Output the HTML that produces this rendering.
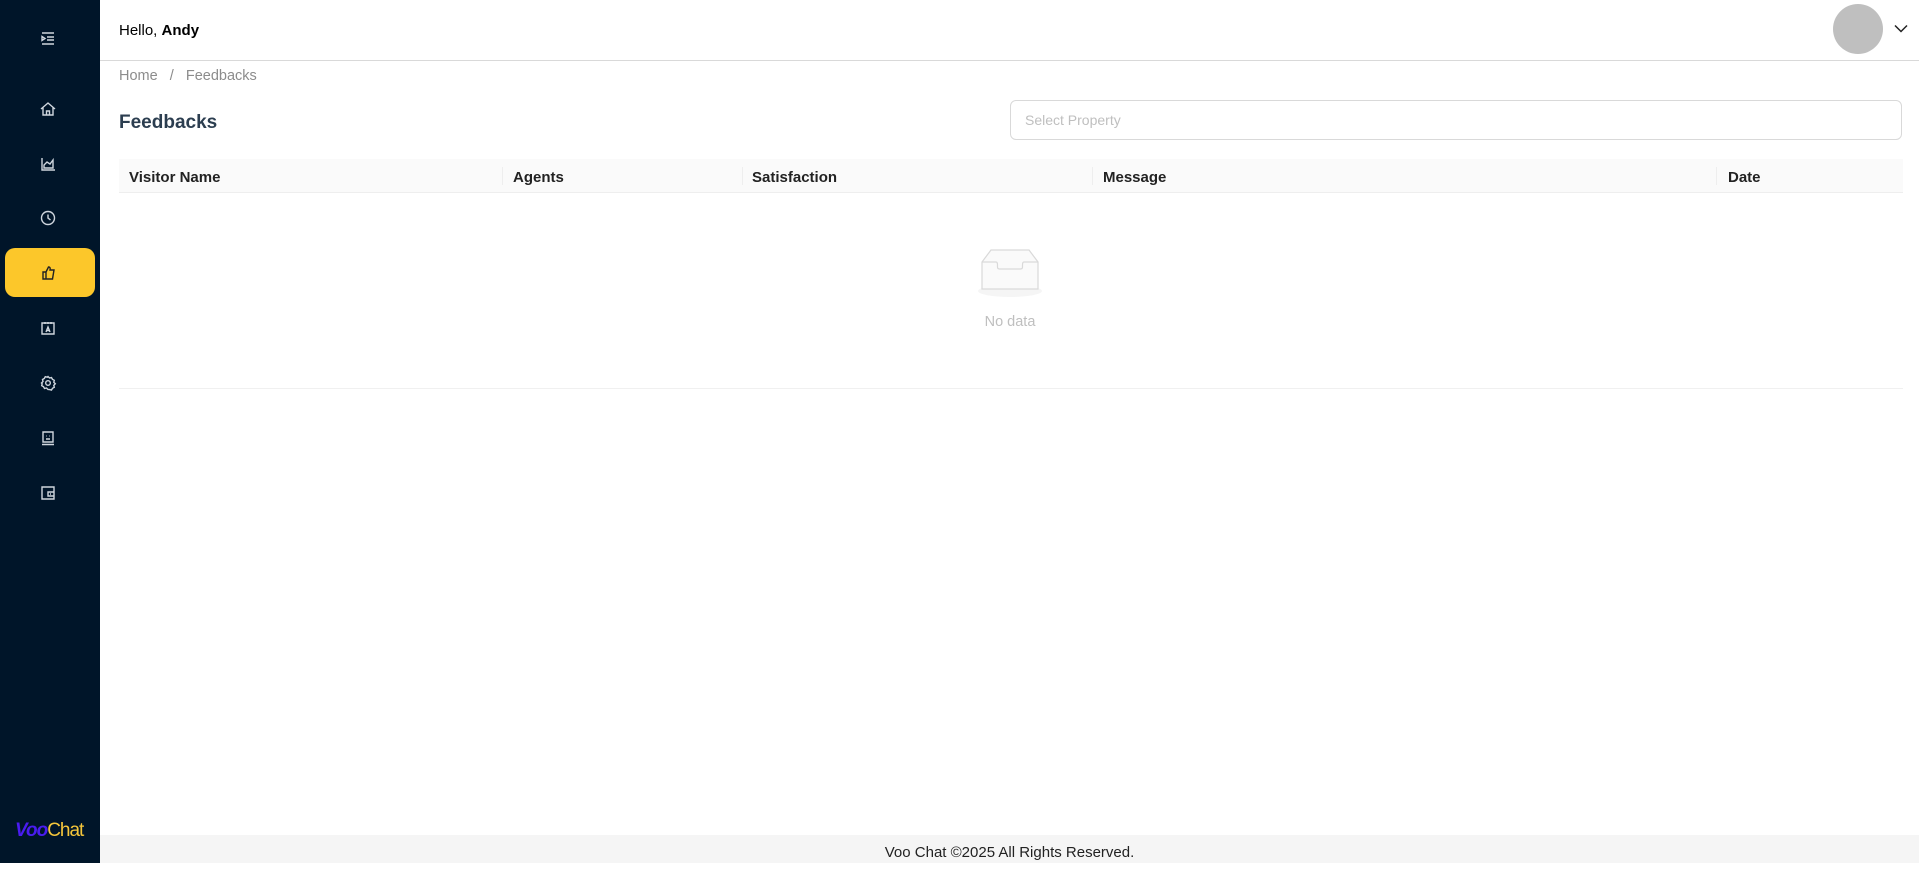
<!DOCTYPE html>
<html><head><meta charset="utf-8"><style>
*{box-sizing:border-box;margin:0;padding:0}
body{width:1919px;height:863px;overflow:hidden;font-family:"Liberation Sans",sans-serif;background:#fff;position:relative;color:#000}
.sb{position:absolute;left:0;top:0;width:100px;height:863px;background:#001529}
.ic{position:absolute;left:38px;width:20px;height:20px}
.ic svg{width:20px;height:20px;fill:none;stroke:#cfd6de;stroke-width:1.4}
.act{position:absolute;left:5px;top:248px;width:90px;height:49px;background:#fcc72a;border-radius:10px}
.hdr{position:absolute;left:100px;top:0;right:0;height:61px;border-bottom:1px solid #d9d9d9}
.abs{position:absolute}
.th{position:absolute;top:159px;height:34px;background:#fafafa;border-bottom:1px solid #eee;font-size:15px;font-weight:600;line-height:38px;color:#222}
.sep{position:absolute;top:167px;width:1px;height:18px;background:#eee}
</style></head><body>
<div class="sb">
 <div class="ic" style="top:28px"><svg viewBox="0 0 20 20"><path d="M4 5h12M9 9h7M9 12h7M4 16h12M4 8.5l3 2-3 2z"/></svg></div>
 <div class="ic" style="top:99px"><svg viewBox="0 0 20 20"><path d="M3 10l7-6 7 6M5 8.5V16h10V8.5M8.5 16v-4h3v4"/></svg></div>
 <div class="ic" style="top:154px"><svg viewBox="0 0 20 20"><path d="M4 4v12h13M6 14v-3l3-3 3 2 3-4v8z"/></svg></div>
 <div class="ic" style="top:208px"><svg viewBox="0 0 20 20"><circle cx="10" cy="10" r="6.5"/><path d="M10 6.5V10l2.5 2"/></svg></div>
 <div class="act"></div>
 <div class="ic" style="top:263px"><svg viewBox="0 0 20 20" style="stroke:#222"><path d="M5 9h3v7H5zM8 9l2.5-5c1.5 0 2 1 1.5 3H16l-1.5 9H8"/></svg></div>
 <div class="ic" style="top:318px"><svg viewBox="0 0 20 20"><path d="M4 5h12v11H4zM7 4v2M10 4v2M13 4v2M8 14l2-5 2 5M8.7 12.5h2.6"/></svg></div>
 <div class="ic" style="top:373px"><svg viewBox="0 0 20 20"><circle cx="10" cy="10" r="2.3"/><path d="M10 3.5l1.5 1.5 2-.5 1 1.8 1.8 1-.5 2 1.5 1.5-1.5 1.5.5 2-1.8 1-1 1.8-2-.5L10 16.5l-1.5-1.5-2 .5-1-1.8-1.8-1 .5-2L3.5 10l1.5-1.5-.5-2 1.8-1 1-1.8 2 .5z"/></svg></div>
 <div class="ic" style="top:428px"><svg viewBox="0 0 20 20"><path d="M5 4h10v10H5zM4 16.5h12M8 8h.5M11.5 8h.5M8 11h4"/></svg></div>
 <div class="ic" style="top:483px"><svg viewBox="0 0 20 20"><path d="M4 4h12v12H4zM10 9h6v4h-6zM12 11h1"/></svg></div>
 <div class="abs" style="left:15px;top:820px;font-size:19px;letter-spacing:-1px"><span style="color:#4a1cf0;font-weight:bold;font-style:italic">Voo</span><span style="color:#f5c63b">Chat</span></div>
</div>
<div class="hdr">
 <div class="abs" style="left:19px;top:22px;font-size:15px">Hello, <b>Andy</b></div>
 <div class="abs" style="left:1733px;top:4px;width:50px;height:50px;border-radius:50%;background:#bfbfbf"></div>
 <svg class="abs" style="left:1794px;top:24px" width="14" height="10" viewBox="0 0 14 10"><path d="M1 1.5l6 6 6-6" fill="none" stroke="#222" stroke-width="1.5"/></svg>
</div>
<div class="abs" style="left:119px;top:68px;font-size:14.5px;color:#8c8c8c">Home &nbsp;&nbsp;/&nbsp;&nbsp; Feedbacks</div>
<div class="abs" style="left:119px;top:112px;font-size:19px;font-weight:bold;color:#2c3e50">Feedbacks</div>
<div class="abs" style="left:1010px;top:100px;width:892px;height:40px;border:1px solid #d9d9d9;border-radius:6px;font-size:14px;color:#bfbfbf;line-height:38px;padding-left:14px">Select Property</div>
<div class="th" style="left:119px;width:1784px"></div>
<div class="th" style="left:129px;background:none;border:none">Visitor Name</div>
<div class="th" style="left:513px;background:none;border:none">Agents</div>
<div class="th" style="left:752px;background:none;border:none">Satisfaction</div>
<div class="th" style="left:1103px;background:none;border:none">Message</div>
<div class="th" style="left:1728px;background:none;border:none">Date</div>
<div class="sep" style="left:502px"></div><div class="sep" style="left:742px"></div><div class="sep" style="left:1092px"></div><div class="sep" style="left:1716px"></div>
<svg class="abs" style="left:970px;top:246px" width="80" height="54" viewBox="0 0 80 54"><ellipse cx="40" cy="45" rx="32" ry="6" fill="#f5f5f5"/><path d="M12 16l9-12h38l9 12v27H12z" fill="#fafafa" stroke="#d9d9d9" stroke-width="1.2"/><path d="M12 16h14c1 0 1.5 1 1.5 3v2c0 1.5 1 2 2 2h21c1 0 2-.5 2-2v-2c0-2 .5-3 1.5-3H68" fill="none" stroke="#d9d9d9" stroke-width="1.2"/></svg>
<div class="abs" style="left:930px;top:314px;width:160px;text-align:center;font-size:14.5px;color:#bfbfbf">No data</div>
<div class="abs" style="left:119px;top:388px;width:1784px;height:1px;background:#f0f0f0"></div>
<div class="abs" style="left:100px;top:835px;width:1819px;height:28px;background:#f5f5f5;text-align:center;font-size:15px;line-height:36px;color:#222">Voo Chat ©2025 All Rights Reserved.</div>
</body></html>
